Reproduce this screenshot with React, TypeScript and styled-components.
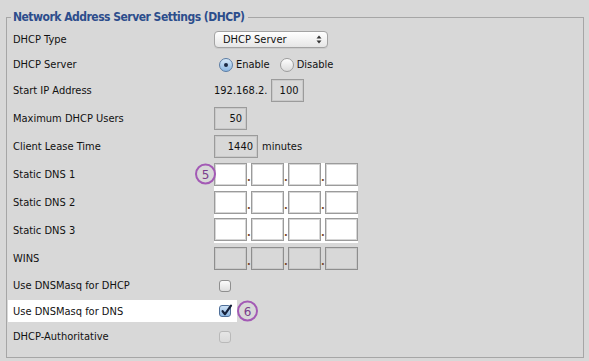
import styled, { createGlobalStyle } from 'styled-components';

const GlobalStyle = createGlobalStyle`
  html, body {
    margin: 0;
    background: #d8d8d8;
  }
  body {
    font-family: 'DejaVu Sans Condensed', 'DejaVu Sans', sans-serif;
    font-size: 11px;
    color: #111;
  }
`;

const Page = styled.div`
  width: 589px;
  height: 361px;
  box-sizing: border-box;
  padding: 9px 5px 0 6px;
  overflow: hidden;
`;

const Fieldset = styled.fieldset`
  margin: 0;
  min-width: 0;
  border: 1px solid #a6a6a6;
  padding: 2px 0 8px 1px;
`;

const Legend = styled.legend`
  margin-left: 3px;
  padding: 0 3px 0 2px;
  font-size: 12px;
  letter-spacing: -0.5px;
  line-height: 16px;
  font-weight: bold;
  color: #2c4d8c;
`;

const Row = styled.div<{ $h: number; $highlight?: boolean }>`
  display: grid;
  grid-template-columns: 201px auto;
  justify-content: start;
  align-items: center;
  box-sizing: border-box;
  height: ${(p) => (p.$highlight ? p.$h - 3 : p.$h)}px;
  margin: ${(p) => (p.$highlight ? '1px 0 2px' : '0')};
  padding: ${(p) => (p.$highlight ? '0 6px 0 5px' : '0 0 0 5px')};
  width: ${(p) => (p.$highlight ? 'max-content' : 'auto')};
  background: ${(p) => (p.$highlight ? '#fff' : 'transparent')};
`;

const Label = styled.span`
  white-space: nowrap;
`;

const Control = styled.div`
  position: relative;
  align-self: stretch;
  display: flex;
  align-items: center;
`;

const Select = styled.div`
  width: 114px;
  height: 17px;
  box-sizing: border-box;
  display: flex;
  align-items: center;
  justify-content: space-between;
  padding: 0 5px 0 8px;
  border: 1px solid #a3a3a3;
  border-radius: 4px;
  background: linear-gradient(#ffffff, #e6e6e6);
  box-shadow: 0 1px 0 rgba(0, 0, 0, 0.06);
`;

const RadioOption = styled.label`
  display: flex;
  align-items: center;
  margin-left: 5px;
  margin-right: 5px;
  gap: 3px;
`;

const Radio = styled.span<{ $on?: boolean }>`
  position: relative;
  width: 14px;
  height: 14px;
  box-sizing: border-box;
  border-radius: 50%;
  border: 1px solid ${(p) => (p.$on ? '#5a7ca4' : '#9d9d9d')};
  background: ${(p) =>
    p.$on
      ? 'linear-gradient(#d6e8f8, #8db8e3)'
      : 'linear-gradient(#fdfdfd, #dcdcdc)'};

  &::after {
    content: '';
    display: ${(p) => (p.$on ? 'block' : 'none')};
    position: absolute;
    left: 4px;
    top: 4px;
    width: 4px;
    height: 4px;
    border-radius: 50%;
    background: #1c2a44;
  }
`;

const Prefix = styled.span`
  margin-right: 3px;
`;

const Field = styled.input<{ $w: number; $tone: 'gray' | 'white' | 'off' }>`
  width: ${(p) => p.$w}px;
  height: 23px;
  box-sizing: border-box;
  margin: 0;
  padding: 0 4px;
  border: 1px solid ${(p) => (p.$tone === 'off' ? '#8e8e8e' : '#9b9b9b')};
  box-shadow: inset 0 0 0 1px
    ${(p) => (p.$tone === 'white' ? '#d6d6d6' : '#c9c9c9')};
  background: ${(p) => (p.$tone === 'white' ? '#fff' : '#d8d8d8')};
  font: inherit;
  color: #111;
  text-align: right;
  outline: none;
`;

const Unit = styled.span`
  margin-left: 4px;
`;

const IpGroup = styled.div<{ $band?: 'top' | 'mid' | 'bottom' }>`
  display: flex;
  align-items: ${(p) => (p.$band === 'top' ? 'flex-start' : 'center')};
  align-self: stretch;
  margin-top: ${(p) => (p.$band === 'top' ? '3px' : '0')};
  margin-bottom: ${(p) => (p.$band === 'bottom' ? '1px' : '0')};
  background: ${(p) => (p.$band ? '#fff' : 'transparent')};
`;

const Dot = styled.span`
  width: 4px;
  height: 23px;
  line-height: 23px;
  text-align: center;
  font-size: 11px;
  font-weight: bold;
  color: #7a4a2a;
  position: relative;
  top: 3px;
`;

const Check = styled.span<{ $on?: boolean; $off?: boolean }>`
  position: relative;
  width: 12px;
  height: 12px;
  box-sizing: border-box;
  margin-left: 5px;
  border-radius: 3px;
  border: 1px solid
    ${(p) => (p.$on ? '#4f6f99' : p.$off ? '#b9b9b9' : '#8f8f8f')};
  background: ${(p) =>
    p.$on
      ? 'linear-gradient(#cfe3f7, #8cb6e1)'
      : p.$off
        ? 'linear-gradient(#e6e6e6, #dadada)'
        : 'linear-gradient(#fbfbfb, #dedede)'};

  svg {
    position: absolute;
    left: 0px;
    top: -3px;
  }
`;

const Marker = styled.span<{ $left: number }>`
  position: absolute;
  left: ${(p) => p.$left}px;
  top: 50%;
  transform: translateY(-50%);
  width: 21px;
  height: 21px;
  box-sizing: border-box;
  border: 2px solid #a35ab5;
  border-radius: 50%;
  display: flex;
  align-items: center;
  justify-content: center;
  color: #7a3c8c;
  font-family: 'DejaVu Sans', sans-serif;
  font-size: 12px;
`;

function UpDown() {
  return (
    <svg width="6" height="9" viewBox="0 0 6 9">
      <path d="M3 0.5 L5.5 3.5 H0.5 Z" fill="#333" />
      <path d="M3 8.5 L5.5 5.5 H0.5 Z" fill="#333" />
    </svg>
  );
}

function Tick() {
  return (
    <svg width="13" height="14" viewBox="0 0 13 14">
      <path
        d="M2.6 8.2 L5 11.2 L11 2.6"
        fill="none"
        stroke="#16213b"
        strokeWidth="2.2"
        strokeLinecap="round"
        strokeLinejoin="round"
      />
    </svg>
  );
}

function IpFields({
  tone,
  band,
}: {
  tone: 'white' | 'off';
  band?: 'top' | 'mid' | 'bottom';
}) {
  return (
    <IpGroup $band={band}>
      {[0, 1, 2, 3].map((i) => (
        <>
          {i > 0 && <Dot key={`d${i}`}>.</Dot>}
          <Field key={i} $w={33} $tone={tone} readOnly defaultValue="" />
        </>
      ))}
    </IpGroup>
  );
}

export default function App() {
  return (
    <Page>
      <GlobalStyle />
      <Fieldset>
        <Legend>Network Address Server Settings (DHCP)</Legend>

        <Row $h={25}>
          <Label>DHCP Type</Label>
          <Control>
            <Select>
              <span>DHCP Server</span>
              <UpDown />
            </Select>
          </Control>
        </Row>

        <Row $h={25}>
          <Label>DHCP Server</Label>
          <Control>
            <RadioOption>
              <Radio $on />
              Enable
            </RadioOption>
            <RadioOption>
              <Radio />
              Disable
            </RadioOption>
          </Control>
        </Row>

        <Row $h={27}>
          <Label>Start IP Address</Label>
          <Control>
            <Prefix>192.168.2.</Prefix>
            <Field $w={33} $tone="gray" readOnly defaultValue="100" />
          </Control>
        </Row>

        <Row $h={28}>
          <Label>Maximum DHCP Users</Label>
          <Control>
            <Field $w={33} $tone="gray" readOnly defaultValue="50" />
          </Control>
        </Row>

        <Row $h={28}>
          <Label>Client Lease Time</Label>
          <Control>
            <Field $w={44} $tone="gray" readOnly defaultValue="1440" />
            <Unit>minutes</Unit>
          </Control>
        </Row>

        <Row $h={28}>
          <Label>Static DNS 1</Label>
          <Control>
            <IpFields tone="white" band="top" />
            <Marker $left={-19}>5</Marker>
          </Control>
        </Row>

        <Row $h={28}>
          <Label>Static DNS 2</Label>
          <Control>
            <IpFields tone="white" band="mid" />
          </Control>
        </Row>

        <Row $h={28}>
          <Label>Static DNS 3</Label>
          <Control>
            <IpFields tone="white" band="bottom" />
          </Control>
        </Row>

        <Row $h={28}>
          <Label>WINS</Label>
          <Control>
            <IpFields tone="off" />
          </Control>
        </Row>

        <Row $h={27}>
          <Label>Use DNSMasq for DHCP</Label>
          <Control>
            <Check />
          </Control>
        </Row>

        <Row $h={25} $highlight>
          <Label>Use DNSMasq for DNS</Label>
          <Control>
            <Check $on>
              <Tick />
            </Check>
            <Marker $left={23}>6</Marker>
          </Control>
        </Row>

        <Row $h={25}>
          <Label>DHCP-Authoritative</Label>
          <Control>
            <Check $off />
          </Control>
        </Row>
      </Fieldset>
    </Page>
  );
}
